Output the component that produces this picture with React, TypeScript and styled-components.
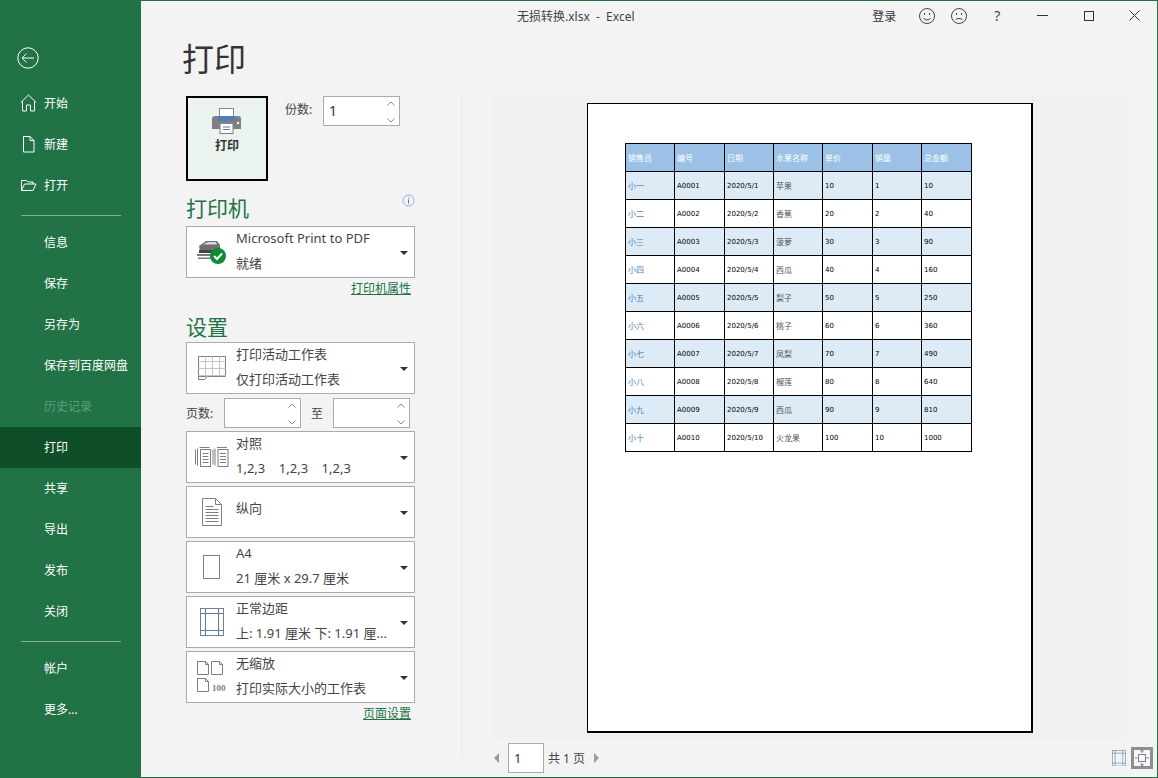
import styled, { createGlobalStyle } from 'styled-components'

const GlobalStyle = createGlobalStyle`
  html, body {
    margin: 0;
    padding: 0;
    height: 100%;
    overflow: hidden;
  }

  * {
    box-sizing: border-box;
  }

  body {
    font-family: "Noto Sans", "Noto Sans CJK SC", sans-serif;
    font-size: 13px;
    color: #444;
  }
`

const green = '#217346'

const Window = styled.div`
  display: flex;
  width: 1158px;
  height: 778px;
  border: 1px solid ${green};
  border-left: 0;
  background: #f3f3f3;
  overflow: hidden;
`

const Sidebar = styled.aside`
  width: 141px;
  flex-shrink: 0;
  background: ${green};
  color: #fff;
  display: flex;
  flex-direction: column;
`

const BackButton = styled.div`
  height: 82px;
  padding: 46px 0 0 17px;

  svg {
    display: block;
  }
`

const NavItem = styled.div<{ $selected?: boolean; $disabled?: boolean }>`
  display: flex;
  align-items: center;
  height: 41px;
  padding: 0 0 2px 44px;
  position: relative;
  font-size: 12px;
  background: ${(p) => (p.$selected ? '#0f4f28' : 'transparent')};
  color: ${(p) => (p.$disabled ? '#5f9b7c' : '#fff')};

  svg {
    position: absolute;
    left: 20px;
    top: 11px;
  }
`

const NavRule = styled.div`
  height: 1px;
  margin: 9px 20px 6px 21px;
  background: #7fae95;
`

const Main = styled.main`
  flex: 1;
  min-width: 0;
  display: flex;
  flex-direction: column;
`

const TitleBar = styled.header`
  height: 29px;
  display: flex;
  align-items: center;
  padding-left: 376px;
  font-size: 12px;
  color: #444;
`

const FileName = styled.span`
  width: 358px;
  white-space: pre;
`

const SignIn = styled.span`
  width: 39px;
  color: #333;
`

const TitleIcon = styled.span<{ $width: number }>`
  display: flex;
  align-items: center;
  justify-content: center;
  width: ${(p) => p.$width}px;
  font-size: 14px;
  color: #444;
`

const PageTitle = styled.h1`
  margin: 0;
  height: 66px;
  padding: 5px 0 0 41px;
  font-size: 32px;
  line-height: 48px;
  font-weight: 400;
  color: #333;
`

const Body = styled.div`
  flex: 1;
  min-height: 0;
  display: flex;
`

const Settings = styled.section`
  width: 321px;
  padding-left: 45px;
  border-right: 1px solid #e8e8e8;
  margin-bottom: 20px;
`

const SettingsInner = styled.div`
  width: 229px;
  display: flex;
  flex-direction: column;
`

const PrintRow = styled.div`
  display: flex;
  align-items: flex-start;
  height: 85px;
`

const PrintButton = styled.button`
  width: 82px;
  height: 85px;
  border: 2px solid #000;
  background: #ebf3ee;
  padding: 10px 0 0;
  display: flex;
  flex-direction: column;
  align-items: center;
  font-family: inherit;
  font-size: 12px;
  font-weight: 700;
  color: #333;
  line-height: 18px;

  svg {
    margin-bottom: 3px;
  }
`

const CopiesLabel = styled.span`
  margin: 4px 10px 0 17px;
  font-size: 12px;
  width: 28px;
  white-space: nowrap;
`

const Spinner = styled.div<{ $width?: number }>`
  position: relative;
  width: ${(p) => p.$width ?? 77}px;
  height: 30px;
  border: 1px solid #ababab;
  background: #fff;
  padding: 4px 0 0 5px;
  font-size: 14px;
  line-height: 20px;
  color: #333;
  flex-shrink: 0;

  svg {
    position: absolute;
    right: 2px;
    top: 1px;
  }
`

const SectionHead = styled.div<{ $top: number }>`
  display: flex;
  justify-content: space-between;
  align-items: flex-start;
  height: 30px;
  margin-top: ${(p) => p.$top}px;
  font-size: 21px;
  line-height: 30px;
  color: ${green};

  svg {
    margin: 1px 0 0;
  }
`

const Select = styled.div<{ $gap?: number }>`
  position: relative;
  height: 52px;
  margin-top: ${(p) => p.$gap ?? 0}px;
  padding-left: 49px;
  border: 1px solid #ababab;
  background: #fff;
  display: flex;
  flex-direction: column;
  justify-content: center;
  font-size: 13px;
  line-height: 25px;
  color: #444;
`

const SelectIcon = styled.span`
  position: absolute;
  left: 0;
  top: 0;
  width: 49px;
  height: 50px;
  display: flex;
  align-items: center;
  justify-content: center;
`

const SelectLine = styled.div<{ $single?: boolean }>`
  white-space: pre;
  margin-bottom: ${(p) => (p.$single ? 8 : 0)}px;
`

const SelectLines = styled.div`
  margin-bottom: 3px;
`

const Caret = styled.span`
  position: absolute;
  right: 6px;
  top: 24px;
  width: 0;
  height: 0;
  border-left: 4px solid transparent;
  border-right: 4px solid transparent;
  border-top: 4px solid #333;
`

const LinkRow = styled.div<{ $top: number }>`
  margin-top: ${(p) => p.$top}px;
  padding-right: 4px;
  text-align: right;
  font-size: 12px;
  line-height: 18px;
  color: ${green};
  text-decoration: underline;
`

const PagesRow = styled.div`
  display: flex;
  align-items: center;
  margin: 4px 0 3px;
  font-size: 12px;
`

const PagesLabel = styled.span`
  width: 38px;
  white-space: nowrap;
`

const ToLabel = styled.span`
  width: 32px;
  text-align: center;
  font-size: 12px;
`

const Preview = styled.section`
  flex: 1;
  min-width: 0;
  display: flex;
  flex-direction: column;
  padding: 0 30px 0 31px;
`

const Sheet = styled.div`
  height: 642px;
  background: #f0f0f0;
  display: flex;
  justify-content: center;
  padding: 7px 0 0 0;
`

const Paper = styled.div`
  width: 446px;
  height: 630px;
  background: #fff;
  border: 1px solid #000;
  border-right-width: 2px;
  border-bottom-width: 2px;
  padding: 39px 0 0 37px;
`

const Table = styled.table`
  border-collapse: collapse;
  table-layout: fixed;
  width: 347px;
  font-family: "DejaVu Sans", "Noto Sans CJK SC", sans-serif;
  font-size: 7px;
`

const Cell = styled.td<{ $color: string; $cjk?: boolean; $head?: boolean }>`
  height: 28px;
  padding: 0 0 0 2px;
  border: 1px solid #000;
  white-space: nowrap;
  overflow: hidden;
  color: ${(p) => p.$color};
  font-size: ${(p) => (p.$cjk ? 8 : 7)}px;
  letter-spacing: ${(p) => (p.$head ? 0 : 0)}px;
`

const Row = styled.tr<{ $bg: string }>`
  background: ${(p) => p.$bg};
`

const Pager = styled.footer`
  flex: 1;
  display: flex;
  align-items: center;
  padding-top: 1px;
  font-size: 12px;
`

const PageBox = styled.div`
  width: 36px;
  height: 30px;
  margin: 0 4px 0 8px;
  border: 1px solid #ababab;
  background: #fff;
  padding: 5px 0 0 5px;
  font-size: 13px;
  line-height: 19px;
  color: #333;
`

const PagerText = styled.span`
  white-space: pre;
  margin-right: 8px;
`

const PagerSpacer = styled.div`
  flex: 1;
`

const ViewButton = styled.span<{ $active?: boolean }>`
  display: flex;
  align-items: center;
  justify-content: center;
  width: 22px;
  height: 22px;
  margin-right: ${(p) => (p.$active ? -26 : 0)}px;
  margin-left: ${(p) => (p.$active ? 1 : 0)}px;
  border: 3px solid ${(p) => (p.$active ? '#8e8e8e' : 'transparent')};
  background: ${(p) => (p.$active ? '#f7f7f7' : 'transparent')};
`

const stroke = '#7f7f7f'

const BackIcon = () => (
  <svg width="22" height="22" viewBox="0 0 22 22" fill="none" stroke="#fff">
    <circle cx="11" cy="11" r="10.2" />
    <path d="M5 11h12M9.5 6.5 5 11l4.5 4.5" />
  </svg>
)

const HomeIcon = () => (
  <svg width="17" height="18" viewBox="0 0 17 18" fill="none" stroke="#fff">
    <path d="M.8 8.5 8.5 1l7.7 7.5M2.5 7.5v9.500h4v-6h4v6h4V7.500" />
  </svg>
)

const FileIcon = () => (
  <svg width="17" height="18" viewBox="0 0 17 18" fill="none" stroke="#fff">
    <path d="M3.500 1.500h6.500l4 4v11.500H3.500zM10 1.500v4h4" />
  </svg>
)

const FolderIcon = () => (
  <svg width="17" height="18" viewBox="0 0 17 18" fill="none" stroke="#fff">
    <path d="M1.500 14.500v-10h5l1.500 1.500h5v2M1.500 14.500l3-6.500h11.500l-3 6.500z" />
  </svg>
)

const PrinterIcon = () => (
  <svg width="30" height="26" viewBox="0 0 30 26">
    <rect x="7.500" y=".5" width="14" height="11" fill="#fff" stroke="#8a8a8a" />
    <path d="M3 8h23a3 3 0 0 1 3 3v10H0V11a3 3 0 0 1 3-3z" fill="#7f7f7f" />
    <rect x="6" y="8" width="17" height="5" fill="#4e7db8" />
    <rect x="8" y="15.500" width="13" height="10" fill="#fff" stroke="#7f7f7f" />
    <path d="M11 19h7M11 21.500h7" stroke="#4e7db8" />
    <rect x="25" y="14" width="2" height="2" fill="#fff" />
  </svg>
)

const SpinArrows = () => (
  <svg width="12" height="28" viewBox="0 0 12 28" fill="none" stroke="#888">
    <path d="M2.500 7.500 6 4l3.500 3.500M2.500 20.500 6 24l3.500-3.500" />
  </svg>
)

const InfoIcon = () => (
  <svg width="13" height="13" viewBox="0 0 13 13" fill="none">
    <circle cx="6.500" cy="6.500" r="5.500" stroke="#8fb2dc" />
    <path d="M6.500 3.500v1M6.500 5.500v4" stroke="#4e7db8" />
  </svg>
)

const DeviceIcon = () => (
  <svg width="32" height="26" viewBox="0 0 32 26">
    <path d="M3 7 10 2h11l3 4v6H4z" fill="#6f6f6f" />
    <path d="M7 5.500 12 3h8l1 2.500z" fill="#cfd8e4" />
    <path d="M1 15h14v2H1zM2 18.500h13v1.500H2z" fill="#7a7a7a" />
    <path d="M3 11h16v3H3z" fill="#444" />
    <circle cx="22" cy="17" r="8" fill="#0f8a35" />
    <path d="m18 17 3 3 5-5.500" fill="none" stroke="#fff" strokeWidth="2" />
  </svg>
)

const SheetIcon = () => (
  <svg width="30" height="26" viewBox="0 0 30 26" fill="none" stroke={stroke}>
    <path d="M1.500 1.500h27v20H10.500l-3 3h-6z" />
    <path d="M1.500 6.500h27M1.500 13.500h27M1.500 20.500h27M8.500 1.500v20M15.500 1.500v20M22.500 1.500v20" stroke="#c4c4c4" />
    <path d="M1.500 21.500h8v-0" />
  </svg>
)

const CollateIcon = () => (
  <svg width="34" height="22" viewBox="0 0 34 22" fill="none" stroke={stroke}>
    <path d="M.5 3.500v15M2.500 2.500v17M4.500 1.500h10M18 3.500v15M20 2.500v17M22 1.500h10" />
    <rect x="5.500" y="3.500" width="10" height="17" fill="#fff" />
    <rect x="23" y="3.500" width="10" height="17" fill="#fff" />
    <path d="M7.500 7.500h6M7.500 10.500h6M7.500 13.500h6M7.500 16.500h6M25 7.500h6M25 10.500h6M25 13.500h6M25 16.500h6" />
  </svg>
)

const PortraitIcon = () => (
  <svg width="22" height="28" viewBox="0 0 22 28" fill="none" stroke={stroke}>
    <path d="M1.500 .5h13l6 6v21h-19zM14.500 .5v6h6" />
    <path d="M4.500 8.500h8M4.500 11.500h13M4.500 14.500h13M4.500 17.500h13M4.500 20.500h13M4.500 23.500h13" />
  </svg>
)

const PaperIcon = () => (
  <svg width="18" height="24" viewBox="0 0 18 24" fill="none" stroke={stroke}>
    <rect x=".5" y=".5" width="16" height="23" />
  </svg>
)

const MarginIcon = ({ size = 24 }: { size?: number }) => (
  <svg width={size} height={(size * 28) / 24} viewBox="0 0 24 28" fill="none" stroke={stroke}>
    <rect x=".5" y=".5" width="23" height="27" />
    <path d="M.5 5.500h23M.5 22.500h23M5.500 .5v27M18.500 .5v27" stroke="#4e7db8" />
  </svg>
)

const ScaleIcon = () => (
  <svg width="30" height="34" viewBox="0 0 30 34" fill="none" stroke={stroke}>
    <path d="M.5 1.500h8l3 3v10H.5zM8.500 1.500v3h3M14.500 1.500h8l3 3v10h-11zM22.500 1.500v3h3M.5 18.500h8l3 3v10H.5zM8.500 18.500v3h3" />
    <text x="15" y="31" fontFamily="Liberation Serif, serif" fontWeight="700" fontSize="9" fill="#7f7f7f" stroke="none">
      100
    </text>
  </svg>
)

const SmileIcon = ({ sad }: { sad?: boolean }) => (
  <svg width="16" height="16" viewBox="0 0 16 16" fill="none" stroke="#444">
    <circle cx="8" cy="8" r="7.500" />
    <path d="M5.500 5v2M10.500 5v2" />
    <path d={sad ? 'M4.500 12c1-2 6-2 7 0' : 'M4.500 10c1 2.500 6 2.500 7 0'} />
  </svg>
)

const MinIcon = () => (
  <svg width="11" height="11" viewBox="0 0 11 11" stroke="#333">
    <path d="M0 5.500h11" />
  </svg>
)

const MaxIcon = () => (
  <svg width="10" height="10" viewBox="0 0 10 10" fill="none" stroke="#333">
    <rect x=".5" y=".5" width="9" height="9" />
  </svg>
)

const CloseIcon = () => (
  <svg width="11" height="11" viewBox="0 0 11 11" stroke="#333">
    <path d="m.5.5 10 10M10.500.5l-10 10" />
  </svg>
)

const PagerArrow = ({ right }: { right?: boolean }) => (
  <svg width="7" height="10" viewBox="0 0 7 10" fill="#9a9a9a">
    <path d={right ? 'M1 0v10l5-5z' : 'M6 0v10L1 5z'} />
  </svg>
)

const FitIcon = () => (
  <svg width="14" height="16" viewBox="0 0 14 16" fill="none">
    <rect x="3.500" y="4.500" width="7" height="7" stroke="#7f7f7f" />
    <path d="M7 0v3M5.500 1.500 7 0l1.500 1.500M7 13v3M5.500 14.500 7 16l1.500-1.500M0 8h2.500M11.500 8H14" stroke="#4e7db8" />
  </svg>
)

const columns = [49, 50, 49, 49, 50, 49, 50]
const heads = ['销售员', '编号', '日期', '水果名称', '单价', '销量', '总金额']
const people = ['小一', '小二', '小三', '小四', '小五', '小六', '小七', '小八', '小九', '小十']
const fruits = ['苹果', '香蕉', '菠萝', '西瓜', '梨子', '桃子', '凤梨', '榴莲', '西瓜', '火龙果']

const App = () => (
  <>
    <GlobalStyle />
    <Window>
      <Sidebar>
        <BackButton>
          <BackIcon />
        </BackButton>
        <NavItem>
          <HomeIcon />
          开始
        </NavItem>
        <NavItem>
          <FileIcon />
          新建
        </NavItem>
        <NavItem>
          <FolderIcon />
          打开
        </NavItem>
        <NavRule />
        <NavItem>信息</NavItem>
        <NavItem>保存</NavItem>
        <NavItem>另存为</NavItem>
        <NavItem>保存到百度网盘</NavItem>
        <NavItem $disabled>历史记录</NavItem>
        <NavItem $selected>打印</NavItem>
        <NavItem>共享</NavItem>
        <NavItem>导出</NavItem>
        <NavItem>发布</NavItem>
        <NavItem>关闭</NavItem>
        <NavRule />
        <NavItem>帐户</NavItem>
        <NavItem>更多...</NavItem>
      </Sidebar>
      <Main>
        <TitleBar>
          <FileName>无损转换.xlsx  -  Excel</FileName>
          <SignIn>登录</SignIn>
          <TitleIcon $width={32}>
            <SmileIcon />
          </TitleIcon>
          <TitleIcon $width={32}>
            <SmileIcon sad />
          </TitleIcon>
          <TitleIcon $width={46}>?</TitleIcon>
          <TitleIcon $width={46}>
            <MinIcon />
          </TitleIcon>
          <TitleIcon $width={46}>
            <MaxIcon />
          </TitleIcon>
          <TitleIcon $width={46}>
            <CloseIcon />
          </TitleIcon>
        </TitleBar>
        <PageTitle>打印</PageTitle>
        <Body>
          <Settings>
            <SettingsInner>
              <PrintRow>
                <PrintButton>
                  <PrinterIcon />
                  打印
                </PrintButton>
                <CopiesLabel>份数:</CopiesLabel>
                <Spinner>
                  1
                  <SpinArrows />
                </Spinner>
              </PrintRow>
              <SectionHead $top={12}>
                打印机
                <InfoIcon />
              </SectionHead>
              <Select $gap={3}>
                <SelectIcon>
                  <DeviceIcon />
                </SelectIcon>
                <SelectLines>
                  <SelectLine>Microsoft Print to PDF</SelectLine>
                  <SelectLine>就绪</SelectLine>
                </SelectLines>
                <Caret />
              </Select>
              <LinkRow $top={2}>打印机属性</LinkRow>
              <SectionHead $top={14}>设置</SectionHead>
              <Select $gap={0}>
                <SelectIcon>
                  <SheetIcon />
                </SelectIcon>
                <SelectLines>
                  <SelectLine>打印活动工作表</SelectLine>
                  <SelectLine>仅打印活动工作表</SelectLine>
                </SelectLines>
                <Caret />
              </Select>
              <PagesRow>
                <PagesLabel>页数:</PagesLabel>
                <Spinner>
                  <SpinArrows />
                </Spinner>
                <ToLabel>至</ToLabel>
                <Spinner>
                  <SpinArrows />
                </Spinner>
              </PagesRow>
              <Select>
                <SelectIcon>
                  <CollateIcon />
                </SelectIcon>
                <SelectLines>
                  <SelectLine>对照</SelectLine>
                  <SelectLine>1,2,3    1,2,3    1,2,3</SelectLine>
                </SelectLines>
                <Caret />
              </Select>
              <Select $gap={3}>
                <SelectIcon>
                  <PortraitIcon />
                </SelectIcon>
                <SelectLine $single>纵向</SelectLine>
                <Caret />
              </Select>
              <Select $gap={3}>
                <SelectIcon>
                  <PaperIcon />
                </SelectIcon>
                <SelectLines>
                  <SelectLine>A4</SelectLine>
                  <SelectLine>21 厘米 x 29.7 厘米</SelectLine>
                </SelectLines>
                <Caret />
              </Select>
              <Select $gap={3}>
                <SelectIcon>
                  <MarginIcon />
                </SelectIcon>
                <SelectLines>
                  <SelectLine>正常边距</SelectLine>
                  <SelectLine>上: 1.91 厘米 下: 1.91 厘...</SelectLine>
                </SelectLines>
                <Caret />
              </Select>
              <Select $gap={3}>
                <SelectIcon>
                  <ScaleIcon />
                </SelectIcon>
                <SelectLines>
                  <SelectLine>无缩放</SelectLine>
                  <SelectLine>打印实际大小的工作表</SelectLine>
                </SelectLines>
                <Caret />
              </Select>
              <LinkRow $top={2}>页面设置</LinkRow>
            </SettingsInner>
          </Settings>
          <Preview>
            <Sheet>
              <Paper>
                <Table>
                  <colgroup>
                    {columns.map((w, i) => (
                      <col key={i} style={{ width: w }} />
                    ))}
                  </colgroup>
                  <tbody>
                    <Row $bg="#9bc2e6">
                      {heads.map((h) => (
                        <Cell key={h} $color="#fff" $cjk $head>
                          {h}
                        </Cell>
                      ))}
                    </Row>
                    {people.map((name, i) => {
                      const n = i + 1
                      const price = n * 10
                      return (
                        <Row key={name} $bg={i % 2 === 0 ? '#ddebf7' : '#fff'}>
                          <Cell $color="#4a7fb5" $cjk>
                            {name}
                          </Cell>
                          <Cell $color="#000">{`A${String(n).padStart(4, '0')}`}</Cell>
                          <Cell $color="#000">{`2020/5/${n}`}</Cell>
                          <Cell $color="#555" $cjk>
                            {fruits[i]}
                          </Cell>
                          <Cell $color="#000">{price}</Cell>
                          <Cell $color="#000">{n}</Cell>
                          <Cell $color="#000">{price * n}</Cell>
                        </Row>
                      )
                    })}
                  </tbody>
                </Table>
              </Paper>
            </Sheet>
            <Pager>
              <PagerArrow />
              <PageBox>1</PageBox>
              <PagerText>共 1 页</PagerText>
              <PagerArrow right />
              <PagerSpacer />
              <ViewButton>
                <MarginIcon size={14} />
              </ViewButton>
              <ViewButton $active>
                <FitIcon />
              </ViewButton>
            </Pager>
          </Preview>
        </Body>
      </Main>
    </Window>
  </>
)

export default App
